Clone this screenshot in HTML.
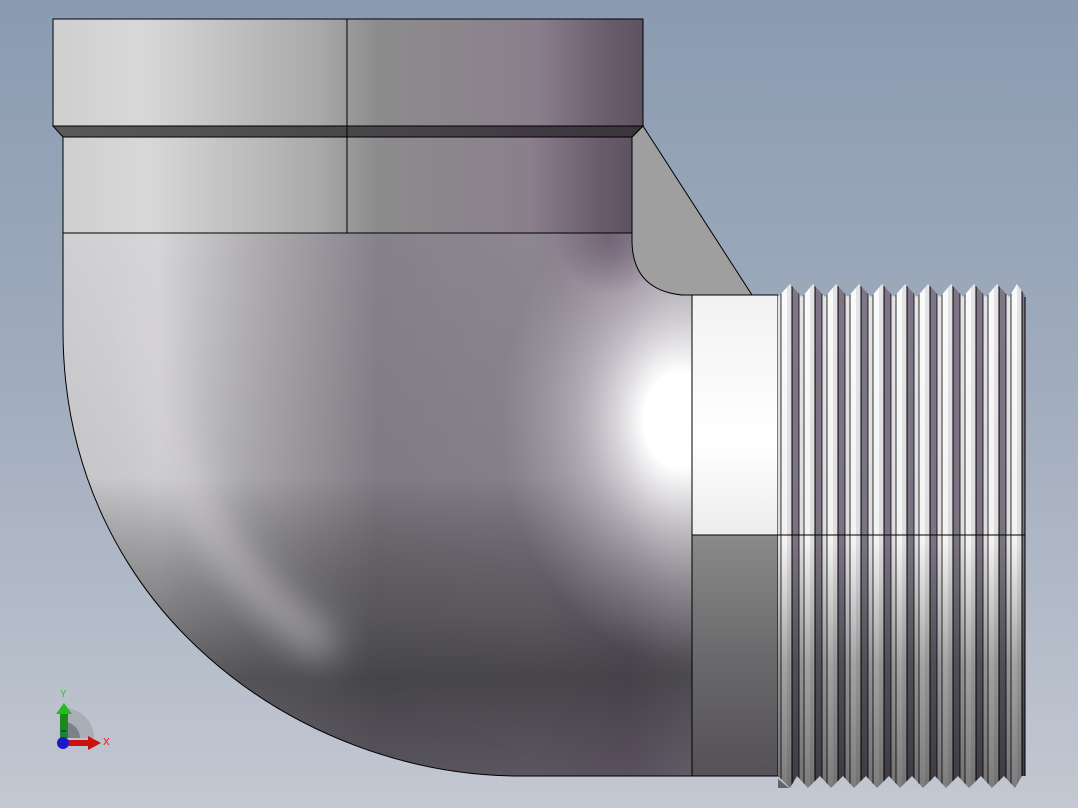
<!DOCTYPE html>
<html><head><meta charset="utf-8"><style>html,body{margin:0;padding:0;width:1078px;height:808px;overflow:hidden}</style></head><body>
<svg width="1078" height="808" viewBox="0 0 1078 808" xmlns="http://www.w3.org/2000/svg">
<defs>
<linearGradient id="bg" x1="0" y1="0" x2="0" y2="808" gradientUnits="userSpaceOnUse"><stop offset="0" stop-color="#8a9bb1"/><stop offset="0.5" stop-color="#a2adbe"/><stop offset="1" stop-color="#c3c8d2"/></linearGradient>
<linearGradient id="fl" x1="0" y1="0" x2="1" y2="0"><stop offset="0" stop-color="#cfcfcf"/><stop offset="0.15" stop-color="#d8d8d8"/><stop offset="0.45" stop-color="#a9a9a9"/><stop offset="0.55" stop-color="#8c8c8c"/><stop offset="0.82" stop-color="#8a7f8c"/><stop offset="0.94" stop-color="#6a5c6c"/><stop offset="1" stop-color="#5e5262"/></linearGradient>
<linearGradient id="ch" x1="0" y1="0" x2="1" y2="0"><stop offset="0" stop-color="#5a5a5a"/><stop offset="1" stop-color="#3a343c"/></linearGradient>
<linearGradient id="bodyh" x1="63" y1="0" x2="692" y2="0" gradientUnits="userSpaceOnUse"><stop offset="0" stop-color="#cfcfd2"/><stop offset="0.15" stop-color="#d6d5d8"/><stop offset="0.3" stop-color="#b0aeb2"/><stop offset="0.5" stop-color="#86828a"/><stop offset="0.75" stop-color="#8c8690"/><stop offset="0.9" stop-color="#85788a"/><stop offset="1" stop-color="#9a96a0"/></linearGradient>
<linearGradient id="bodyv" x1="0" y1="233" x2="0" y2="776" gradientUnits="userSpaceOnUse"><stop offset="0" stop-color="#000" stop-opacity="0"/><stop offset="0.45" stop-color="#000" stop-opacity="0.05"/><stop offset="0.7" stop-color="#2a2a2c" stop-opacity="0.5"/><stop offset="0.82" stop-color="#2a2a2c" stop-opacity="0.7"/><stop offset="1" stop-color="#3a3540" stop-opacity="0.6"/></linearGradient>
<radialGradient id="hl" cx="680" cy="420" r="200" gradientUnits="userSpaceOnUse" gradientTransform="translate(680 420) scale(0.9 1.2) translate(-680 -420)"><stop offset="0" stop-color="#fff"/><stop offset="0.2" stop-color="#fff"/><stop offset="0.55" stop-color="#d8d6da" stop-opacity="0.55"/><stop offset="1" stop-color="#b0acb4" stop-opacity="0"/></radialGradient>
<radialGradient id="dk" cx="610" cy="240" r="55" gradientUnits="userSpaceOnUse"><stop offset="0" stop-color="#5a4a5e" stop-opacity="0.55"/><stop offset="1" stop-color="#5a4a5e" stop-opacity="0"/></radialGradient>
<linearGradient id="rs" x1="0" y1="295" x2="0" y2="776" gradientUnits="userSpaceOnUse"><stop offset="0" stop-color="#f2f2f2"/><stop offset="0.3" stop-color="#ffffff"/><stop offset="0.499" stop-color="#ececec"/><stop offset="0.5" stop-color="#8a8a8a"/><stop offset="0.75" stop-color="#6a6a6c"/><stop offset="1" stop-color="#555157"/></linearGradient>
<pattern id="th" x="778" y="0" width="23" height="808" patternUnits="userSpaceOnUse">
<rect x="0" y="0" width="23" height="808" fill="#e4e4e6"/>
<rect x="3" y="0" width="6" height="808" fill="#fafafa"/>
<rect x="14" y="0" width="7" height="808" fill="#7e7686"/>
<line x1="3" y1="0" x2="3" y2="808" stroke="#000" stroke-width="0.8"/>
<line x1="14" y1="0" x2="14" y2="808" stroke="#000" stroke-width="1"/>
<line x1="21" y1="0" x2="21" y2="808" stroke="#000" stroke-width="0.8"/>
</pattern>
<linearGradient id="thd" x1="0" y1="297" x2="0" y2="788" gradientUnits="userSpaceOnUse"><stop offset="0" stop-color="#000" stop-opacity="0"/><stop offset="0.5" stop-color="#000" stop-opacity="0.03"/><stop offset="0.75" stop-color="#000" stop-opacity="0.35"/><stop offset="1" stop-color="#000" stop-opacity="0.5"/></linearGradient>
<filter id="bl" x="-20%" y="-20%" width="140%" height="140%"><feGaussianBlur stdDeviation="18"/></filter>
<clipPath id="bc"><path d="M63,233 L63,330 C63,610 300,776 520,776 L692,776 L692,295 L682,295 Q632,290 632,233 Z"/></clipPath>
</defs>
<rect width="1078" height="808" fill="url(#bg)"/>
<path d="M63,233 L63,330 C63,610 300,776 520,776 L692,776 L692,295 L682,295 Q632,290 632,233 Z" fill="url(#bodyh)"/>
<path d="M63,233 L63,330 C63,610 300,776 520,776 L692,776 L692,295 L682,295 Q632,290 632,233 Z" fill="url(#bodyv)"/>
<g clip-path="url(#bc)"><path d="M150,300 C150,480 230,580 330,650" fill="none" stroke="#d8d6dc" stroke-width="30" stroke-opacity="0.6" filter="url(#bl)"/></g>
<path d="M63,233 L63,330 C63,610 300,776 520,776 L692,776 L692,295 L682,295 Q632,290 632,233 Z" fill="url(#hl)"/>
<path d="M63,233 L63,330 C63,610 300,776 520,776 L692,776 L692,295 L682,295 Q632,290 632,233 Z" fill="url(#dk)" stroke="#000" stroke-width="1"/>
<path d="M643,126 L752,295 L682,295 Q632,290 632,240 L632,137 Z" fill="#9f9f9f" stroke="#000" stroke-width="1"/>
<rect x="53" y="19" width="590" height="107" fill="url(#fl)" stroke="#000" stroke-width="1"/>
<path d="M53,126 L643,126 L632,137 L63,137 Z" fill="url(#ch)" stroke="#000" stroke-width="1"/>
<rect x="63" y="137" width="569" height="96" fill="url(#fl)" stroke="#000" stroke-width="1"/>
<line x1="347" y1="19" x2="347" y2="233" stroke="#000" stroke-width="1"/>
<rect x="692" y="295" width="86" height="481" fill="url(#rs)" stroke="#000" stroke-width="1"/>
<path d="M778,284 L778,776 L790,788 L1025,788 L1025,284 Z" fill="url(#th)"/>
<path d="M778,284 L778,788 L1025,788 L1025,284 Z" fill="url(#thd)"/>
<g fill="url(#bg)">
<path d="M778,270 L778,297 L790,284 L802,297 L813,284 L825,297 L836,284 L848,297 L859,284 L871,297 L882,284 L894,297 L905,284 L917,297 L928,284 L940,297 L951,284 L963,297 L974,284 L986,297 L997,284 L1009,297 L1017,284 L1026,297 L1026,270 Z"/>
<path d="M776,777 L790,789 L776,800 L1035,800 L1035,776 L1022,776 L1015,788 L1004,776 L992,788 L981,776 L969,788 L958,776 L946,788 L935,776 L923,788 L912,776 L900,788 L889,776 L877,788 L866,776 L854,788 L843,776 L831,788 L820,776 L808,788 L797,776 L790,788 L779,777 Z"/>
<rect x="1026" y="270" width="20" height="530"/>
</g>
<line x1="692" y1="535" x2="1025" y2="535" stroke="#000" stroke-width="1"/>
<line x1="1025" y1="297" x2="1025" y2="776" stroke="#000" stroke-width="1"/>
<g>
<path d="M64,708 A30,30 0 0 1 94,738 L64,738 Z" fill="#a9adb4"/>
<path d="M64,722 A16,16 0 0 1 80,738 L64,738 Z" fill="#7d8088"/>
<rect x="60" y="712" width="8" height="26" fill="#1a8a1a"/>
<path d="M56,714 L64,703 L72,714 Z" fill="#22bb22"/>
<rect x="64" y="740" width="26" height="6" fill="#cc1111"/>
<path d="M88,736 L101,743 L88,750 Z" fill="#cc1111"/>
<circle cx="63" cy="743" r="6" fill="#1a1acc"/>
<path d="M61,731 L66,731" stroke="#1a1acc" stroke-width="1.5"/>
<text x="60" y="697" font-family="Liberation Sans, sans-serif" font-size="10" fill="#22cc22">Y</text>
<text x="103" y="745" font-family="Liberation Sans, sans-serif" font-size="10" fill="#ee1111">X</text>
</g>
</svg>
</body></html>
